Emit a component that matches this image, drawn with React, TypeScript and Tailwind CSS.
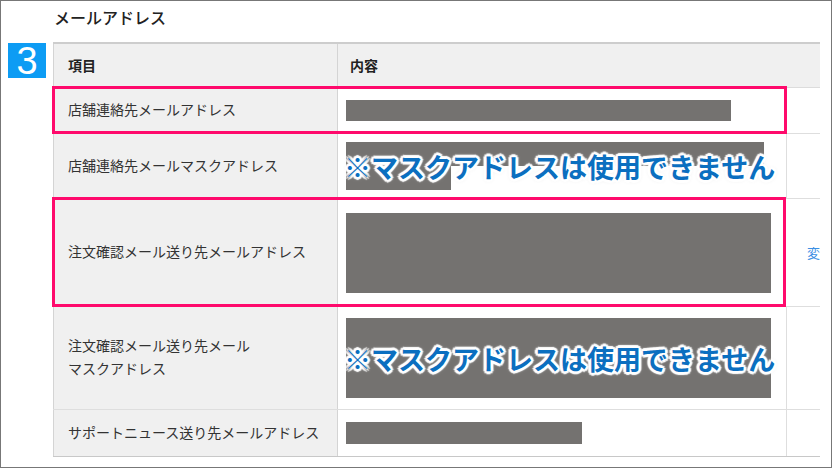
import React from 'react';

type Row = {
  label: React.ReactNode;
  height: string;
  bars: React.ReactNode;
  note?: boolean;
  highlight?: boolean;
  link?: boolean;
};

const Bar = ({ w, h }: { w: string; h: string }) => (
  <div className={`${w} ${h} bg-[#747270]`} />
);

const rows: Row[] = [
  {
    label: '店舗連絡先メールアドレス',
    height: 'h-[46px]',
    highlight: true,
    bars: <Bar w="w-[385px]" h="h-[21px]" />,
  },
  {
    label: '店舗連絡先メールマスクアドレス',
    height: 'h-[65px]',
    note: true,
    bars: (
      <div className="flex flex-col">
        <Bar w="w-[418px]" h="h-[24px]" />
        <Bar w="w-[105px]" h="h-[24px]" />
      </div>
    ),
  },
  {
    label: '注文確認メール送り先メールアドレス',
    height: 'h-[108px]',
    highlight: true,
    link: true,
    bars: <Bar w="w-[425px]" h="h-[80px]" />,
  },
  {
    label: (
      <>
        注文確認メール送り先メール
        <br />
        マスクアドレス
      </>
    ),
    height: 'h-[103px]',
    note: true,
    bars: <Bar w="w-[425px]" h="h-[80px]" />,
  },
  {
    label: 'サポートニュース送り先メールアドレス',
    height: 'h-[46px]',
    bars: <Bar w="w-[236px]" h="h-[22px]" />,
  },
];

export default function App() {
  return (
    <div className="w-[832px] h-[468px] border border-[#777] bg-white overflow-hidden font-['Noto_Sans_CJK_JP',sans-serif]">
      <h2 className="h-[41px] pl-[53px] pt-[4px] text-[16px] leading-[24px] font-medium text-[#222]">
        メールアドレス
      </h2>

      <div className="flex">
        {/* step badge */}
        <div className="w-[52px] shrink-0 pl-[7px] pt-px">
          <div className="w-[38px] h-[35px] bg-[#0d9cf4] flex items-center justify-center text-white text-[38px] leading-none font-['Liberation_Sans',sans-serif]">
            3
          </div>
        </div>

        {/* table */}
        <div className="w-[767px] shrink-0 border-b border-[#c8c8c8]">
          <div className="flex h-[46px] border-t-2 border-[#cdcdcd] border-b border-b-[#dcdcdc] bg-[#f0f0f0] text-[14px] font-bold text-[#222]">
            <div className="w-[285px] border-l border-r border-[#d4d4d4] pl-[14px] flex items-center">項目</div>
            <div className="flex-1 pl-[12px] flex items-center">内容</div>
          </div>

          {rows.map((r, i) => (
            <div key={i} className={`flex ${r.height} border-b border-[#dedede] last:border-b-0`}>
              <div className="relative flex w-[733px]">
                <div className="w-[285px] bg-[#f0f0f0] border-l border-r border-[#d4d4d4] pl-[14px] flex items-center text-[14px] leading-[23px] text-[#333]">
                  <span className="-translate-y-px">{r.label}</span>
                </div>
                <div className="relative flex-1 pl-[8px] flex items-center">
                  {r.bars}
                  {r.note && (
                    <span className="absolute left-[6px] top-1/2 -translate-y-1/2 whitespace-nowrap text-[27px] font-bold leading-none text-[#0b6fc0] [text-shadow:0_0_2px_#fff,0_0_2px_#fff,2px_2px_1px_#fff,-2px_-2px_1px_#fff,2px_-2px_1px_#fff,-2px_2px_1px_#fff,0_3px_1px_#fff,0_-3px_1px_#fff,3px_0_1px_#fff,-3px_0_1px_#fff,0_0_5px_#ccc]">
                      ※マスクアドレスは使用できません
                    </span>
                  )}
                </div>
                {r.highlight && (
                  <span className="pointer-events-none absolute left-[-1px] right-[-1px] top-[-2px] bottom-[-1px] border-[3px] border-[#ff0a6c]" />
                )}
              </div>
              <div className="flex-1 border-l border-[#dedede] pl-[21px] flex items-center text-[13px] text-[#3b8fe4] whitespace-nowrap">
                {r.link && '変'}
              </div>
            </div>
          ))}
        </div>
      </div>
    </div>
  );
}
